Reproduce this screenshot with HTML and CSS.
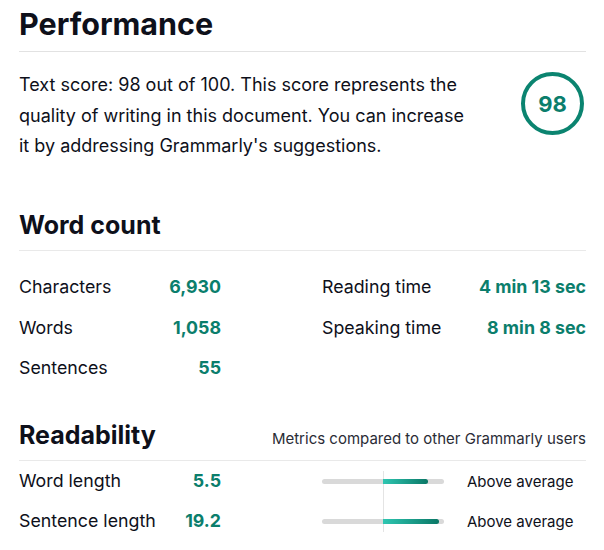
FILE: index.html
```html
<!DOCTYPE html>
<html>
<head>
<meta charset="utf-8">
<link rel="stylesheet" href="styles.css">
</head>
<body>
<div class="page">
  <section class="perf">
    <h1 class="title">Performance</h1>
    <div class="perf-body">
      <p class="perf-text">Text score: 98 out of 100. This score represents the quality of writing in this document. You can increase it by addressing Grammarly's suggestions.</p>
      <div class="score">98</div>
    </div>
  </section>

  <section class="wc">
    <h2 class="heading">Word count</h2>
    <div class="wc-grid">
      <div class="stat"><span class="lbl">Characters</span><span class="val">6,930</span></div>
      <div class="stat wide"><span class="lbl">Reading time</span><span class="val">4 min 13 sec</span></div>
      <div class="stat"><span class="lbl">Words</span><span class="val">1,058</span></div>
      <div class="stat wide"><span class="lbl">Speaking time</span><span class="val">8 min 8 sec</span></div>
      <div class="stat"><span class="lbl">Sentences</span><span class="val">55</span></div>
    </div>
  </section>

  <section class="rd">
    <div class="rd-head">
      <h2 class="heading rd-title">Readability</h2>
      <span class="rd-note">Metrics compared to other Grammarly users</span>
    </div>
    <div class="rd-rows">
      <div class="rd-row first">
        <div class="stat"><span class="lbl">Word length</span><span class="val">5.5</span></div>
        <div class="bar"><div class="fill" style="width:45px"></div></div>
        <span class="rd-label">Above average</span>
      </div>
      <div class="rd-row last">
        <div class="stat"><span class="lbl">Sentence length</span><span class="val">19.2</span></div>
        <div class="bar"><div class="fill" style="width:56px"></div></div>
        <span class="rd-label">Above average</span>
      </div>
    </div>
  </section>
</div>
</body>
</html>
```
FILE: styles.css
```css
* { box-sizing: border-box; }
html, body { margin: 0; padding: 0; background: #fff; }
body {
  font-family: Inter, "Noto Sans", "DejaVu Sans", sans-serif;
  color: #0e101a;
}
.page { padding: 0 18px 0 19px; }

.title {
  margin: 0;
  font-size: 30.5px;
  font-weight: 700;
  line-height: 48px;
  padding-bottom: 3px;
  border-bottom: 1px solid #e2e2e2;
}
.perf-body {
  display: flex;
  justify-content: space-between;
  align-items: flex-start;
  padding-top: 18px;
}
.perf-text {
  margin: 0;
  width: 452px;
  font-size: 18px;
  line-height: 30.5px;
  color: #0e101a;
}
.score {
  width: 63px;
  height: 63px;
  margin-top: 2px;
  margin-right: 2px;
  border: 4px solid #0b8470;
  border-radius: 50%;
  display: flex;
  align-items: center;
  justify-content: center;
  font-size: 22px;
  font-weight: 700;
  color: #0b7e6c;
}

.wc { padding-top: 43.5px; }
.heading {
  margin: 0;
  font-size: 25px;
  font-weight: 700;
  line-height: 40px;
  padding-bottom: 5px;
  border-bottom: 1px solid #e9e9e9;
}
.wc-grid {
  display: grid;
  grid-template-columns: 202px 264px;
  justify-content: space-between;
  padding-top: 16px;
}
.stat {
  display: flex;
  justify-content: space-between;
  align-items: baseline;
  height: 40.5px;
  line-height: 40.5px;
  font-size: 17.8px;
}
.val {
  font-weight: 700;
  color: #0b7e6c;
}

.rd { padding-top: 26px; }
.rd-head {
  display: flex;
  justify-content: space-between;
  align-items: baseline;
  padding-bottom: 5.5px;
  border-bottom: 1px solid #e9e9e9;
}
.rd-title { border-bottom: none; padding-bottom: 0; }
.rd-note { font-size: 15px; color: #2a2c36; }
.rd-row {
  display: flex;
  align-items: center;
  height: 40px;
}
.rd-row .stat { width: 202px; height: 40px; line-height: 40px; }
.bar {
  position: relative;
  margin-left: 101px;
  width: 122px;
  height: 5px;
  border-radius: 3px;
  background: #d9d9d9;
}
.bar::before {
  content: "";
  position: absolute;
  left: 61px;
  width: 1px;
  background: #e4e4e4;
}
.first .bar::before { top: -7.5px; bottom: -17.5px; }
.last .bar::before { top: -17.5px; bottom: -8.5px; }
.fill {
  position: absolute;
  left: 61px;
  top: 0;
  height: 5px;
  border-radius: 0 3px 3px 0;
  background: linear-gradient(90deg, #2ec6b1, #0a7766);
}
.rd-label {
  margin-left: 23px;
  font-size: 15px;
}
```
